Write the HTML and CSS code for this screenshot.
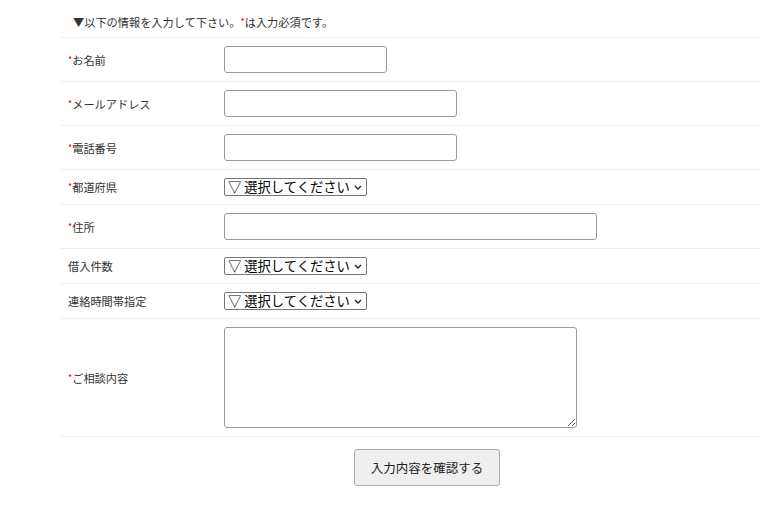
FILE: index.html
```html
<!DOCTYPE html>
<html lang="ja">
<head>
    <meta charset="UTF-8">
    <meta name="viewport" content="width=device-width, initial-scale=1.0">
    <title>お問い合わせ</title>
    <link rel="stylesheet" href="styles.css">
</head>
<body>

<div class="container">
    <form id="contactForm">
        <p class="lead">▼以下の情報を入力して下さい。<span class="req">*</span>は入力必須です。</p>
        <table class="form-table">
            <tr>
                <th><span class="req">*</span>お名前</th>
                <td><input type="text" name="name" class="w-s"></td>
            </tr>
            <tr>
                <th><span class="req">*</span>メールアドレス</th>
                <td><input type="email" name="email" class="w-m"></td>
            </tr>
            <tr>
                <th><span class="req">*</span>電話番号</th>
                <td><input type="tel" name="tel" class="w-m"></td>
            </tr>
            <tr>
                <th><span class="req">*</span>都道府県</th>
                <td>
                    <select name="pref">
                        <option>▽ 選択してください</option>
                    </select>
                </td>
            </tr>
            <tr>
                <th><span class="req">*</span>住所</th>
                <td><input type="text" name="address" class="w-l"></td>
            </tr>
            <tr>
                <th>借入件数</th>
                <td>
                    <select name="count">
                        <option>▽ 選択してください</option>
                    </select>
                </td>
            </tr>
            <tr>
                <th>連絡時間帯指定</th>
                <td>
                    <select name="time">
                        <option>▽ 選択してください</option>
                    </select>
                </td>
            </tr>
            <tr>
                <th><span class="req">*</span>ご相談内容</th>
                <td><textarea name="message"></textarea></td>
            </tr>
        </table>
        <div class="actions">
            <button type="submit">入力内容を確認する</button>
        </div>
    </form>
</div>

</body>
</html>
```

FILE: styles.css
```css
html, body {
    overflow: hidden;
}
body {
    font-family: 'Noto Sans CJK JP', sans-serif;
    font-size: 11.2px;
    color: #333;
    background-color: #ffffff;
    margin: 0;
    padding: 0;
}
.container {
    width: 732px;
    margin-left: 61px;
}
.lead {
    margin: 0;
    padding: 15px 12px 8px;
    line-height: 14px;
    border-bottom: 1px solid #eeeeee;
}
.req {
    color: #e60012;
    font-size: 9px;
    vertical-align: 2px;
}
.form-table {
    width: 100%;
    border-collapse: collapse;
}
.form-table th,
.form-table td {
    padding: 8px 0;
    line-height: 14px;
    border-bottom: 1px solid #eeeeee;
    vertical-align: middle;
    text-align: left;
}
.form-table th {
    width: 156px;
    padding-left: 7px;
    font-weight: normal;
}
input {
    height: 27px;
    padding: 0 4px;
    border: 1px solid #999;
    border-radius: 3px;
    box-sizing: border-box;
    display: block;
}
.w-s {
    width: 163px;
}
.w-m {
    width: 233px;
}
.w-l {
    width: 373px;
}
select {
    -webkit-appearance: none;
    appearance: none;
    width: 143px;
    height: 18px;
    padding: 0 14px 0 3px;
    font-family: 'Noto Sans CJK JP', sans-serif;
    font-size: 13.3px;
    line-height: 16px;
    color: #000;
    background: #fff url("data:image/svg+xml,%3Csvg xmlns='http://www.w3.org/2000/svg' width='8' height='5' viewBox='0 0 8 5'%3E%3Cpath d='M1 1l3 3 3-3' fill='none' stroke='%23222' stroke-width='1.3'/%3E%3C/svg%3E") no-repeat right 4px center;
    border: 1px solid #767676;
    border-radius: 2px;
    box-sizing: border-box;
    display: block;
}
textarea {
    width: 353px;
    height: 101px;
    border: 1px solid #999;
    border-radius: 3px;
    box-sizing: border-box;
    display: block;
}
.actions {
    padding-top: 12px;
    text-align: center;
}
.actions button {
    width: 146px;
    height: 37px;
    font-family: 'Noto Sans CJK JP', sans-serif;
    font-size: 12.5px;
    color: #222;
    background-color: #efefef;
    border: 1px solid #aaa;
    border-radius: 3px;
    cursor: pointer;
}
.actions button:hover {
    background-color: #e5e5e5;
}
```
